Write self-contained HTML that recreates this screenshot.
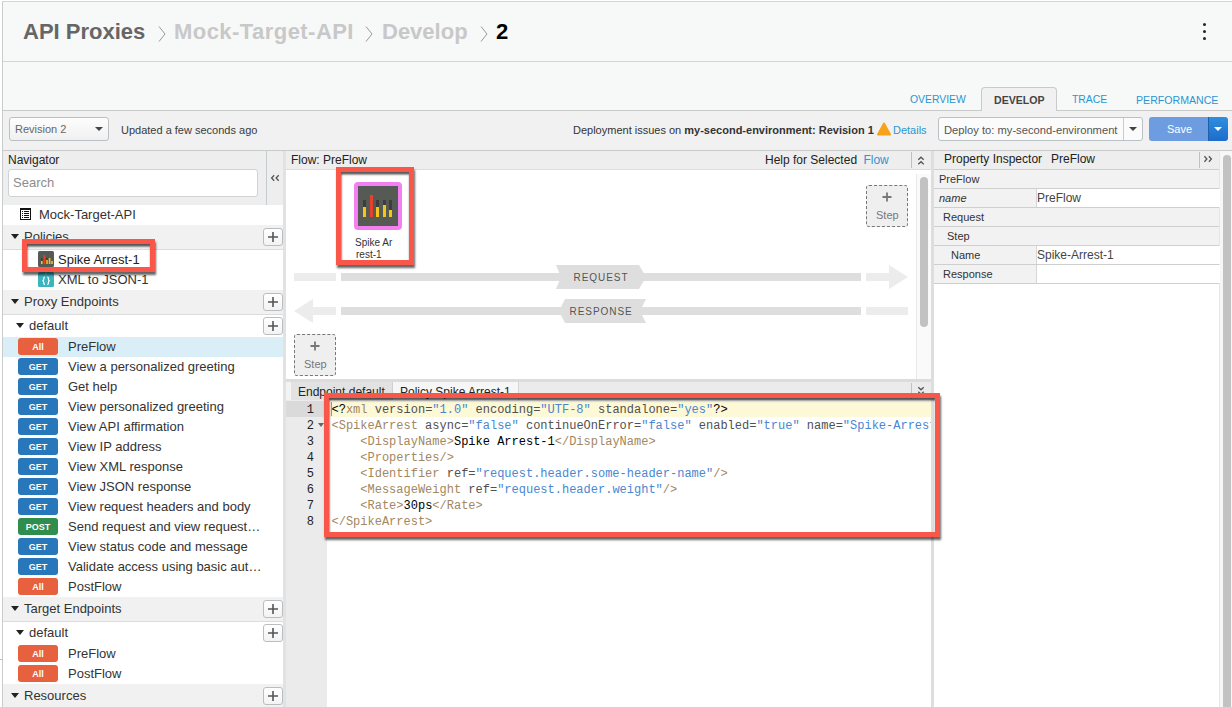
<!DOCTYPE html>
<html><head><meta charset="utf-8">
<style>
*{box-sizing:border-box;margin:0;padding:0}
html,body{width:1232px;height:707px;overflow:hidden;background:#fff;font-family:"Liberation Sans",sans-serif;color:#333}
.a{position:absolute}
.t{position:absolute;white-space:nowrap;line-height:1}
</style></head><body>
<!-- frame -->
<div class="a" style="left:2px;top:1px;width:1230px;height:706px;border-left:1px solid #c9cccc;border-top:1px solid #d4d6d6;background:#f7f8f8"></div>
<!-- header line -->
<div class="a" style="left:3px;top:61px;width:1229px;height:1px;background:#d3d5d5"></div>
<!-- breadcrumb -->
<div class="t" style="left:23px;top:21px;font-size:22px;font-weight:bold;color:#666">API Proxies</div>
<div class="t" style="left:174px;top:21px;font-size:22px;font-weight:bold;color:#c8c8c8;letter-spacing:0.45px">Mock-Target-API</div>
<div class="t" style="left:382px;top:21px;font-size:22px;font-weight:bold;color:#c8c8c8">Develop</div>
<div class="t" style="left:496px;top:21px;font-size:22px;font-weight:bold;color:#000">2</div>
<svg class="a" style="left:157px;top:24.5px" width="10" height="18"><path d="M2 1.5 L8 9 L2 16.5" fill="none" stroke="#999" stroke-width="1"/></svg>
<svg class="a" style="left:364px;top:24.5px" width="10" height="18"><path d="M2 1.5 L8 9 L2 16.5" fill="none" stroke="#999" stroke-width="1"/></svg>
<svg class="a" style="left:479px;top:24.5px" width="10" height="18"><path d="M2 1.5 L8 9 L2 16.5" fill="none" stroke="#999" stroke-width="1"/></svg>
<!-- kebab -->
<div class="a" style="left:1202.5px;top:23px;width:3px;height:3px;border-radius:50%;background:#222"></div>
<div class="a" style="left:1202.5px;top:30px;width:3px;height:3px;border-radius:50%;background:#222"></div>
<div class="a" style="left:1202.5px;top:37px;width:3px;height:3px;border-radius:50%;background:#222"></div>

<!-- tabs -->
<div class="a" style="left:3px;top:110px;width:1229px;height:1px;background:#c9cbcb"></div>
<div class="a" style="left:981px;top:87px;width:76px;height:24px;border:1px solid #c9cbcb;border-bottom:none;border-radius:4px 4px 0 0;background:#f1f1f1"></div>
<div class="t" style="left:910px;top:95px;font-size:10.4px;color:#2a96d3">OVERVIEW</div>
<div class="t" style="left:994px;top:94.5px;font-size:10.6px;font-weight:bold;color:#444">DEVELOP</div>
<div class="t" style="left:1072px;top:95px;font-size:10.4px;color:#2a96d3">TRACE</div>
<div class="t" style="left:1136px;top:95px;font-size:10.6px;color:#2a96d3">PERFORMANCE</div>

<!-- toolbar -->
<div class="a" style="left:3px;top:111px;width:1229px;height:39px;background:#f1f1f1"></div>
<div class="a" style="left:3px;top:150px;width:1229px;height:1px;background:#c9cbcb"></div>
<div class="a" style="left:9px;top:117px;width:100px;height:24px;border:1px solid #b9c1c5;border-radius:3px;background:linear-gradient(#fdfdfd,#f0f0f0)"></div>
<div class="t" style="left:15px;top:124px;font-size:11px;color:#666">Revision 2</div>
<svg class="a" style="left:95px;top:127px" width="8" height="5"><path d="M0 0H8L4 4Z" fill="#444"/></svg>
<div class="t" style="left:121px;top:125px;font-size:11px;color:#3a3a3a">Updated a few seconds ago</div>
<div class="t" style="left:573px;top:125px;font-size:11px;color:#333">Deployment issues on <b>my-second-environment: Revision 1</b></div>
<svg class="a" style="left:877px;top:122px" width="15" height="14"><path d="M7 1.5 L13 12.5 H1Z" fill="#f7a21b" stroke="#f7a21b" stroke-width="2" stroke-linejoin="round"/></svg>
<div class="t" style="left:893px;top:125px;font-size:11px;color:#2a96d3">Details</div>
<div class="a" style="left:938px;top:117px;width:205px;height:24px;border:1px solid #b9c1c5;border-radius:3px;background:#fbfbfb"></div>
<div class="a" style="left:1123px;top:118px;width:1px;height:22px;background:#c9cbcb"></div>
<div class="t" style="left:944px;top:125px;font-size:11.2px;color:#555">Deploy to: my-second-environment</div>
<svg class="a" style="left:1129px;top:127px" width="8" height="5"><path d="M0 0H8L4 4Z" fill="#444"/></svg>
<div class="a" style="left:1149px;top:117px;width:60px;height:24px;border-radius:3px 0 0 3px;background:#6d9de0"></div>
<div class="t" style="left:1167px;top:124px;font-size:11px;color:#fff">Save</div>
<div class="a" style="left:1208px;top:117px;width:20px;height:24px;border-radius:0 3px 3px 0;background:linear-gradient(#2f8ee0,#1d6ccb);border-left:1px solid #1f5fa8"></div>
<svg class="a" style="left:1214px;top:127px" width="8" height="5"><path d="M0 0H8L4 4Z" fill="#fff"/></svg>

<div class="a" style="left:3px;top:151px;width:280px;height:556px;background:#fff"></div>
<div class="a" style="left:3px;top:151px;width:280px;height:54px;background:#eeeeee"></div>
<div class="t" style="left:8px;top:154px;font-size:12px;color:#222">Navigator</div>
<div class="a" style="left:8px;top:169px;width:250px;height:28px;border:1px solid #cfd3d5;border-radius:3px;background:#fff"></div>
<div class="t" style="left:13px;top:176px;font-size:13px;color:#8c8c8c">Search</div>
<div class="a" style="left:266px;top:151px;width:1px;height:54px;background:#c5ccd0"></div>
<svg class="a" style="left:270px;top:174px" width="11" height="8"><path d="M4.2 1.2L1.6 4L4.2 6.8M8.7 1.2L6.1 4L8.7 6.8" fill="none" stroke="#555" stroke-width="1.3"/></svg>
<div class="a" style="left:283px;top:151px;width:3px;height:556px;background:#e2e2e2"></div>
<svg class="a" style="left:20px;top:208px" width="11" height="12"><rect x="0.5" y="0.5" width="10" height="11" fill="#fff" stroke="#111"/><rect x="0" y="0" width="11" height="2" fill="#111"/><path d="M2 3.5H3M4 3.5H9M2 5.5H3M4 5.5H9M2 7.5H3M4 7.5H9M2 9.5H3M4 9.5H9" stroke="#111" stroke-width="1"/></svg>
<div class="t" style="left:39px;top:208px;font-size:13px;color:#333">Mock-Target-API</div>
<div class="a" style="left:3px;top:225px;width:280px;height:25px;background:#f1f1f1;border-bottom:1px solid #dcdcdc"></div>
<svg class="a" style="left:11px;top:234px" width="8" height="5"><path d="M0 0H8L4 5Z" fill="#222"/></svg>
<div class="t" style="left:24px;top:230px;font-size:13px;color:#333">Policies</div>
<div class="a" style="left:263px;top:228px;width:20px;height:18px;border:1px solid #b8bfc3;border-radius:3px;background:linear-gradient(#fff,#f3f3f3)"></div>
<svg class="a" style="left:267px;top:231px" width="12" height="12"><path d="M6 1V11M1 6H11" stroke="#555" stroke-width="1.6"/></svg>
<svg class="a" style="left:38px;top:251px" width="16" height="16"><rect width="16" height="16" rx="1.5" fill="#555a55"/><rect x="3" y="7" width="1.6" height="6" fill="#3b3b3b"/><rect x="3" y="10" width="1.6" height="3" fill="#f5c518"/><rect x="5.6" y="4" width="1.6" height="9" fill="#e8402a"/><rect x="8.2" y="7" width="1.6" height="6" fill="#3b3b3b"/><rect x="8.2" y="9" width="1.6" height="4" fill="#f5c518"/><rect x="10.8" y="7" width="1.6" height="6" fill="#f5c518"/><rect x="13.2" y="10" width="1.6" height="3" fill="#f5c518"/></svg>
<div class="t" style="left:58px;top:253px;font-size:13px;color:#222">Spike Arrest-1</div>
<svg class="a" style="left:38px;top:272px" width="16" height="15"><rect width="16" height="15" rx="1.5" fill="#3ab4bd"/><circle cx="8" cy="1.8" r="0.9" fill="#9fd8dc"/><path d="M7 5C5.6 5 5.8 5.8 5.8 7C5.8 8.2 5.4 8.7 4.4 8.7C5.4 8.7 5.8 9.2 5.8 10.4C5.8 11.6 5.6 12.4 7 12.4M9.2 5C10.6 5 10.4 5.8 10.4 7C10.4 8.2 10.8 8.7 11.8 8.7C10.8 8.7 10.4 9.2 10.4 10.4C10.4 11.6 10.6 12.4 9.2 12.4" fill="none" stroke="#fff" stroke-width="1.2"/></svg>
<div class="t" style="left:58px;top:273px;font-size:13px;color:#333">XML to JSON-1</div>
<div class="a" style="left:3px;top:290px;width:280px;height:25px;background:#f1f1f1;border-bottom:1px solid #dcdcdc"></div>
<svg class="a" style="left:11px;top:299px" width="8" height="5"><path d="M0 0H8L4 5Z" fill="#222"/></svg>
<div class="t" style="left:24px;top:295px;font-size:13px;color:#333">Proxy Endpoints</div>
<div class="a" style="left:263px;top:293px;width:20px;height:18px;border:1px solid #b8bfc3;border-radius:3px;background:linear-gradient(#fff,#f3f3f3)"></div>
<svg class="a" style="left:267px;top:296px" width="12" height="12"><path d="M6 1V11M1 6H11" stroke="#555" stroke-width="1.6"/></svg>
<svg class="a" style="left:16px;top:323px" width="8" height="5"><path d="M0 0H8L4 5Z" fill="#222"/></svg>
<div class="t" style="left:29px;top:319px;font-size:13px;color:#333">default</div>
<div class="a" style="left:263px;top:317px;width:20px;height:18px;border:1px solid #b8bfc3;border-radius:3px;background:linear-gradient(#fff,#f3f3f3)"></div>
<svg class="a" style="left:267px;top:320px" width="12" height="12"><path d="M6 1V11M1 6H11" stroke="#555" stroke-width="1.6"/></svg>
<div class="a" style="left:3px;top:337px;width:280px;height:20px;background:#daeef8"></div>
<div class="a" style="left:18px;top:338px;width:40px;height:17px;border-radius:3px;background:#e8613f;color:#fff;font-size:9px;font-weight:bold;text-align:center;line-height:19px">All</div>
<div class="t" style="left:68px;top:340px;font-size:13px;color:#333">PreFlow</div>
<div class="a" style="left:18px;top:358px;width:40px;height:17px;border-radius:3px;background:#2777ba;color:#fff;font-size:9px;font-weight:bold;text-align:center;line-height:19px">GET</div>
<div class="t" style="left:68px;top:360px;font-size:13px;color:#333">View a personalized greeting</div>
<div class="a" style="left:18px;top:378px;width:40px;height:17px;border-radius:3px;background:#2777ba;color:#fff;font-size:9px;font-weight:bold;text-align:center;line-height:19px">GET</div>
<div class="t" style="left:68px;top:380px;font-size:13px;color:#333">Get help</div>
<div class="a" style="left:18px;top:398px;width:40px;height:17px;border-radius:3px;background:#2777ba;color:#fff;font-size:9px;font-weight:bold;text-align:center;line-height:19px">GET</div>
<div class="t" style="left:68px;top:400px;font-size:13px;color:#333">View personalized greeting</div>
<div class="a" style="left:18px;top:418px;width:40px;height:17px;border-radius:3px;background:#2777ba;color:#fff;font-size:9px;font-weight:bold;text-align:center;line-height:19px">GET</div>
<div class="t" style="left:68px;top:420px;font-size:13px;color:#333">View API affirmation</div>
<div class="a" style="left:18px;top:438px;width:40px;height:17px;border-radius:3px;background:#2777ba;color:#fff;font-size:9px;font-weight:bold;text-align:center;line-height:19px">GET</div>
<div class="t" style="left:68px;top:440px;font-size:13px;color:#333">View IP address</div>
<div class="a" style="left:18px;top:458px;width:40px;height:17px;border-radius:3px;background:#2777ba;color:#fff;font-size:9px;font-weight:bold;text-align:center;line-height:19px">GET</div>
<div class="t" style="left:68px;top:460px;font-size:13px;color:#333">View XML response</div>
<div class="a" style="left:18px;top:478px;width:40px;height:17px;border-radius:3px;background:#2777ba;color:#fff;font-size:9px;font-weight:bold;text-align:center;line-height:19px">GET</div>
<div class="t" style="left:68px;top:480px;font-size:13px;color:#333">View JSON response</div>
<div class="a" style="left:18px;top:498px;width:40px;height:17px;border-radius:3px;background:#2777ba;color:#fff;font-size:9px;font-weight:bold;text-align:center;line-height:19px">GET</div>
<div class="t" style="left:68px;top:500px;font-size:13px;color:#333">View request headers and body</div>
<div class="a" style="left:18px;top:518px;width:40px;height:17px;border-radius:3px;background:#2f8d4e;color:#fff;font-size:9px;font-weight:bold;text-align:center;line-height:19px">POST</div>
<div class="t" style="left:68px;top:520px;font-size:13px;color:#333">Send request and view request…</div>
<div class="a" style="left:18px;top:538px;width:40px;height:17px;border-radius:3px;background:#2777ba;color:#fff;font-size:9px;font-weight:bold;text-align:center;line-height:19px">GET</div>
<div class="t" style="left:68px;top:540px;font-size:13px;color:#333">View status code and message</div>
<div class="a" style="left:18px;top:558px;width:40px;height:17px;border-radius:3px;background:#2777ba;color:#fff;font-size:9px;font-weight:bold;text-align:center;line-height:19px">GET</div>
<div class="t" style="left:68px;top:560px;font-size:13px;color:#333">Validate access using basic aut…</div>
<div class="a" style="left:18px;top:578px;width:40px;height:17px;border-radius:3px;background:#e8613f;color:#fff;font-size:9px;font-weight:bold;text-align:center;line-height:19px">All</div>
<div class="t" style="left:68px;top:580px;font-size:13px;color:#333">PostFlow</div>
<div class="a" style="left:3px;top:597px;width:280px;height:25px;background:#f1f1f1;border-bottom:1px solid #dcdcdc"></div>
<svg class="a" style="left:11px;top:606px" width="8" height="5"><path d="M0 0H8L4 5Z" fill="#222"/></svg>
<div class="t" style="left:24px;top:602px;font-size:13px;color:#333">Target Endpoints</div>
<div class="a" style="left:263px;top:600px;width:20px;height:18px;border:1px solid #b8bfc3;border-radius:3px;background:linear-gradient(#fff,#f3f3f3)"></div>
<svg class="a" style="left:267px;top:603px" width="12" height="12"><path d="M6 1V11M1 6H11" stroke="#555" stroke-width="1.6"/></svg>
<svg class="a" style="left:16px;top:630px" width="8" height="5"><path d="M0 0H8L4 5Z" fill="#222"/></svg>
<div class="t" style="left:29px;top:626px;font-size:13px;color:#333">default</div>
<div class="a" style="left:263px;top:624px;width:20px;height:18px;border:1px solid #b8bfc3;border-radius:3px;background:linear-gradient(#fff,#f3f3f3)"></div>
<svg class="a" style="left:267px;top:627px" width="12" height="12"><path d="M6 1V11M1 6H11" stroke="#555" stroke-width="1.6"/></svg>
<div class="a" style="left:18px;top:645px;width:40px;height:17px;border-radius:3px;background:#e8613f;color:#fff;font-size:9px;font-weight:bold;text-align:center;line-height:19px">All</div>
<div class="t" style="left:68px;top:647px;font-size:13px;color:#333">PreFlow</div>
<div class="a" style="left:18px;top:665px;width:40px;height:17px;border-radius:3px;background:#e8613f;color:#fff;font-size:9px;font-weight:bold;text-align:center;line-height:19px">All</div>
<div class="t" style="left:68px;top:667px;font-size:13px;color:#333">PostFlow</div>
<div class="a" style="left:3px;top:684px;width:280px;height:25px;background:#f1f1f1;border-bottom:1px solid #dcdcdc"></div>
<svg class="a" style="left:11px;top:693px" width="8" height="5"><path d="M0 0H8L4 5Z" fill="#222"/></svg>
<div class="t" style="left:24px;top:689px;font-size:13px;color:#333">Resources</div>
<div class="a" style="left:263px;top:687px;width:20px;height:18px;border:1px solid #b8bfc3;border-radius:3px;background:linear-gradient(#fff,#f3f3f3)"></div>
<svg class="a" style="left:267px;top:690px" width="12" height="12"><path d="M6 1V11M1 6H11" stroke="#555" stroke-width="1.6"/></svg>
<div class="a" style="left:22px;top:239px;width:133px;height:33px;z-index:10;border:5px solid #f9574a;box-shadow:0.5px 2.5px 2px rgba(0,0,0,.6), inset 0.5px 2.5px 2px rgba(0,0,0,.65)"></div>
<div class="a" style="left:0px;top:659px;width:2px;height:1px;background:#bbb"></div>
<div class="a" style="left:286px;top:151px;width:645px;height:228px;background:#fff"></div>
<div class="a" style="left:286px;top:151px;width:645px;height:19px;background:#eeeeee;border-bottom:1px solid #dcdcdc"></div>
<div class="t" style="left:291px;top:154px;font-size:12px;color:#222">Flow: PreFlow</div>
<div class="t" style="left:765px;top:154px;font-size:12px;color:#222">Help for Selected <span style="color:#2a96d3;margin-left:3px">Flow</span></div>
<div class="a" style="left:911px;top:152px;width:1px;height:16px;background:#b9c4ca"></div>
<svg class="a" style="left:917px;top:156px" width="8" height="10"><path d="M1.3 3.8L4 1.2L6.7 3.8M1.3 8.3L4 5.7L6.7 8.3" fill="none" stroke="#555" stroke-width="1.3"/></svg>
<div class="a" style="left:931px;top:151px;width:3px;height:556px;background:#dedede"></div>
<div class="a" style="left:916px;top:174px;width:15px;height:205px;background:#fafafa;border-left:1px solid #e8e8e8"></div>
<div class="a" style="left:920px;top:177px;width:8px;height:150px;background:#c2c2c2;border-radius:4px"></div>
<div class="a" style="left:294px;top:273px;width:42px;height:8px;background:#ececec"></div>
<div class="a" style="left:341px;top:273px;width:520px;height:8px;background:#dedede"></div>
<svg class="a" style="left:866px;top:265px" width="43" height="24"><path d="M0 8H23V0L42 12L23 24V16H0Z" fill="#ececec"/></svg>
<svg class="a" style="left:556px;top:265px" width="91" height="24"><path d="M0 0H83L90 12L83 24H0L5 12Z" fill="#dedede"/></svg>
<div class="t" style="left:573.5px;top:273px;font-size:10px;color:#555;letter-spacing:0.95px">REQUEST</div>
<svg class="a" style="left:294px;top:299px" width="43" height="24"><path d="M42 8H19V0L0 12L19 24V16H42Z" fill="#ececec"/></svg>
<div class="a" style="left:341px;top:307px;width:520px;height:8px;background:#dedede"></div>
<div class="a" style="left:866px;top:307px;width:42px;height:8px;background:#ececec"></div>
<svg class="a" style="left:559px;top:299px" width="88" height="24"><path d="M6 0H87L81 12L87 24H6L0 12Z" fill="#dedede"/></svg>
<div class="t" style="left:569.5px;top:307px;font-size:10px;color:#555;letter-spacing:0.95px">RESPONSE</div>
<div class="a" style="left:866px;top:185px;width:42px;height:42px;border:1px dashed #777;border-radius:3px;background:#efefef"></div>
<svg class="a" style="left:882px;top:192px" width="10" height="10"><path d="M5 0.5V9.5M0.5 5H9.5" stroke="#777" stroke-width="1.8"/></svg>
<div class="t" style="left:876px;top:210px;font-size:11px;color:#777">Step</div>
<div class="a" style="left:294px;top:334px;width:42px;height:42px;border:1px dashed #777;border-radius:3px;background:#efefef"></div>
<svg class="a" style="left:310px;top:341px" width="10" height="10"><path d="M5 0.5V9.5M0.5 5H9.5" stroke="#777" stroke-width="1.8"/></svg>
<div class="t" style="left:304px;top:359px;font-size:11px;color:#777">Step</div>
<div class="a" style="left:354px;top:182px;width:48px;height:48px;border:4px solid #f47ff2;border-radius:4px;background:#555a55"></div>
<div class="a" style="left:363px;top:200px;width:3px;height:17px;background:#3d3d3d"></div>
<div class="a" style="left:363px;top:207px;width:3px;height:10px;background:#f5c518"></div>
<div class="a" style="left:370px;top:195px;width:3px;height:22px;background:#3d3d3d"></div>
<div class="a" style="left:370px;top:195px;width:3px;height:22px;background:#e8402a"></div>
<div class="a" style="left:376px;top:200px;width:3px;height:17px;background:#3d3d3d"></div>
<div class="a" style="left:376px;top:207px;width:3px;height:10px;background:#f5c518"></div>
<div class="a" style="left:383px;top:200px;width:3px;height:17px;background:#3d3d3d"></div>
<div class="a" style="left:383px;top:205px;width:3px;height:12px;background:#f5c518"></div>
<div class="a" style="left:389px;top:200px;width:3px;height:17px;background:#3d3d3d"></div>
<div class="a" style="left:389px;top:210px;width:3px;height:7px;background:#f5c518"></div>
<div class="t" style="left:355px;top:237px;font-size:10px;color:#333;line-height:12px">Spike Ar<br><span style="margin-left:1px">rest-1</span></div>
<div class="a" style="left:336px;top:167px;width:78px;height:98px;z-index:10;border:5px solid #f9574a;box-shadow:0.5px 2.5px 2px rgba(0,0,0,.6), inset 0.5px 2.5px 2px rgba(0,0,0,.65)"></div>
<div class="a" style="left:286px;top:379px;width:645px;height:3px;background:#dcdcdc"></div>
<div class="a" style="left:286px;top:382px;width:645px;height:18px;background:#ebebeb"></div>
<div class="a" style="left:286px;top:382px;width:5px;height:18px;background:#f3f3f3"></div>
<div class="a" style="left:291px;top:382px;width:102px;height:18px;background:#e2e2e2;border-right:1px solid #d0d0d0"></div>
<div class="t" style="left:298px;top:386px;font-size:12px;color:#222">Endpoint default</div>
<div class="a" style="left:393px;top:382px;width:126px;height:18px;background:#f6f6f6;border-right:1px solid #d6d6d6"></div>
<div class="t" style="left:400px;top:386px;font-size:12px;color:#222">Policy Spike Arrest-1</div>
<div class="a" style="left:911px;top:383px;width:1px;height:16px;background:#b9c4ca"></div>
<svg class="a" style="left:917px;top:386px" width="8" height="8"><path d="M1.3 1.2L4 3.8L6.7 1.2M1.3 5.7L4 8.3L6.7 5.7" fill="none" stroke="#555" stroke-width="1.3"/></svg>
<div class="a" style="left:286px;top:400px;width:645px;height:307px;background:#fff"></div>
<div class="a" style="left:286px;top:400px;width:41px;height:307px;background:#ebebeb"></div>
<div class="a" style="left:286px;top:401px;width:41px;height:16px;background:#dadada"></div>
<div class="a" style="left:327px;top:401px;width:604px;height:16px;background:#fdf8d5"></div>
<div class="a" style="left:331px;top:402px;width:1px;height:14px;background:#999"></div>
<div class="t" style="left:290px;top:403px;width:24px;text-align:right;font-family:'Liberation Mono',monospace;font-size:12px;line-height:14px;color:#222">1</div>
<div class="t" style="left:290px;top:419px;width:24px;text-align:right;font-family:'Liberation Mono',monospace;font-size:12px;line-height:14px;color:#222">2</div>
<div class="t" style="left:290px;top:435px;width:24px;text-align:right;font-family:'Liberation Mono',monospace;font-size:12px;line-height:14px;color:#222">3</div>
<div class="t" style="left:290px;top:451px;width:24px;text-align:right;font-family:'Liberation Mono',monospace;font-size:12px;line-height:14px;color:#222">4</div>
<div class="t" style="left:290px;top:467px;width:24px;text-align:right;font-family:'Liberation Mono',monospace;font-size:12px;line-height:14px;color:#222">5</div>
<div class="t" style="left:290px;top:483px;width:24px;text-align:right;font-family:'Liberation Mono',monospace;font-size:12px;line-height:14px;color:#222">6</div>
<div class="t" style="left:290px;top:499px;width:24px;text-align:right;font-family:'Liberation Mono',monospace;font-size:12px;line-height:14px;color:#222">7</div>
<div class="t" style="left:290px;top:515px;width:24px;text-align:right;font-family:'Liberation Mono',monospace;font-size:12px;line-height:14px;color:#222">8</div>
<svg class="a" style="left:318px;top:423px" width="6" height="4"><path d="M0 0H6L3 4Z" fill="#666"/></svg>
<div class="a" style="left:327px;top:401px;width:604px;height:306px;overflow:hidden">
<pre style="position:absolute;left:4.5px;top:1px;margin:0;font-family:'Liberation Mono',monospace;font-size:12px;line-height:16px;white-space:pre"><span style="color:#000">&lt;?</span><span style="color:#a2875f">xml</span><span style="color:#505050"> version=</span><span style="color:#4a87d0">&quot;1.0&quot;</span><span style="color:#505050"> encoding=</span><span style="color:#4a87d0">&quot;UTF-8&quot;</span><span style="color:#505050"> standalone=</span><span style="color:#4a87d0">&quot;yes&quot;</span><span style="color:#000">?&gt;</span>
<span style="color:#a2875f">&lt;SpikeArrest</span><span style="color:#505050"> async=</span><span style="color:#4a87d0">&quot;false&quot;</span><span style="color:#505050"> continueOnError=</span><span style="color:#4a87d0">&quot;false&quot;</span><span style="color:#505050"> enabled=</span><span style="color:#4a87d0">&quot;true&quot;</span><span style="color:#505050"> name=</span><span style="color:#4a87d0">&quot;Spike-Arrest-1&quot;</span><span style="color:#a2875f">&gt;</span>
    <span style="color:#a2875f">&lt;DisplayName&gt;</span><span style="color:#000">Spike Arrest-1</span><span style="color:#a2875f">&lt;/DisplayName&gt;</span>
    <span style="color:#a2875f">&lt;Properties/&gt;</span>
    <span style="color:#a2875f">&lt;Identifier</span><span style="color:#505050"> ref=</span><span style="color:#4a87d0">&quot;request.header.some-header-name&quot;</span><span style="color:#a2875f">/&gt;</span>
    <span style="color:#a2875f">&lt;MessageWeight</span><span style="color:#505050"> ref=</span><span style="color:#4a87d0">&quot;request.header.weight&quot;</span><span style="color:#a2875f">/&gt;</span>
    <span style="color:#a2875f">&lt;Rate&gt;</span><span style="color:#000">30ps</span><span style="color:#a2875f">&lt;/Rate&gt;</span>
<span style="color:#a2875f">&lt;/SpikeArrest&gt;</span></pre>
</div>
<div class="a" style="left:324px;top:393px;width:616px;height:144px;z-index:10;border:5px solid #f9574a;box-shadow:0.5px 2.5px 2px rgba(0,0,0,.6), inset 0.5px 2.5px 2px rgba(0,0,0,.65)"></div>
<div class="a" style="left:934px;top:151px;width:285px;height:556px;background:#fff"></div>
<div class="a" style="left:934px;top:151px;width:285px;height:19px;background:#eeeeee;border-bottom:1px solid #cfcfcf"></div>
<div class="t" style="left:944px;top:153px;font-size:12px;color:#222">Property Inspector</div><div class="t" style="left:1051px;top:153px;font-size:12px;color:#222">PreFlow</div>
<div class="a" style="left:1199px;top:152px;width:1px;height:16px;background:#b9c4ca"></div>
<svg class="a" style="left:1203px;top:155px" width="10" height="8"><path d="M1.4 1.2L3.9 4L1.4 6.8M5.9 1.2L8.4 4L5.9 6.8" fill="none" stroke="#555" stroke-width="1.3"/></svg>
<div class="a" style="left:1219px;top:151px;width:13px;height:556px;background:#f7f7f7;border-left:1px solid #e6e6e6"></div>
<div class="a" style="left:1223px;top:155px;width:8px;height:560px;background:#c2c2c2;border-radius:4px"></div>
<div class="a" style="left:934px;top:170px;width:285px;height:19px;background:#f2f2f2;border-bottom:1px solid #cfcfcf"></div>
<div class="t" style="left:939px;top:174px;font-size:11px;color:#333;">PreFlow</div>
<div class="a" style="left:934px;top:189px;width:285px;height:19px;background:#f2f2f2;border-bottom:1px solid #cfcfcf"></div>
<div class="t" style="left:939px;top:193px;font-size:11px;color:#333;font-style:italic;">name</div>
<div class="a" style="left:1036px;top:189px;width:184px;height:18px;background:#fff;border-left:1px solid #d6d6d6"></div>
<div class="t" style="left:1037px;top:192px;font-size:12px;color:#444">PreFlow</div>
<div class="a" style="left:934px;top:208px;width:285px;height:19px;background:#f2f2f2;border-bottom:1px solid #cfcfcf"></div>
<div class="t" style="left:943px;top:212px;font-size:11px;color:#333;">Request</div>
<div class="a" style="left:934px;top:227px;width:285px;height:19px;background:#f2f2f2;border-bottom:1px solid #cfcfcf"></div>
<div class="t" style="left:947px;top:231px;font-size:11px;color:#333;">Step</div>
<div class="a" style="left:934px;top:246px;width:285px;height:19px;background:#f2f2f2;border-bottom:1px solid #cfcfcf"></div>
<div class="t" style="left:951px;top:250px;font-size:11px;color:#333;">Name</div>
<div class="a" style="left:1036px;top:246px;width:184px;height:18px;background:#fff;border-left:1px solid #d6d6d6"></div>
<div class="t" style="left:1037px;top:249px;font-size:12px;color:#444">Spike-Arrest-1</div>
<div class="a" style="left:934px;top:265px;width:285px;height:19px;background:#f2f2f2;border-bottom:1px solid #cfcfcf"></div>
<div class="t" style="left:943px;top:269px;font-size:11px;color:#333;">Response</div>
<div class="a" style="left:1036px;top:265px;width:184px;height:18px;background:#fff;border-left:1px solid #d6d6d6"></div>
<div class="t" style="left:1037px;top:268px;font-size:12px;color:#444"></div>
</body></html>
